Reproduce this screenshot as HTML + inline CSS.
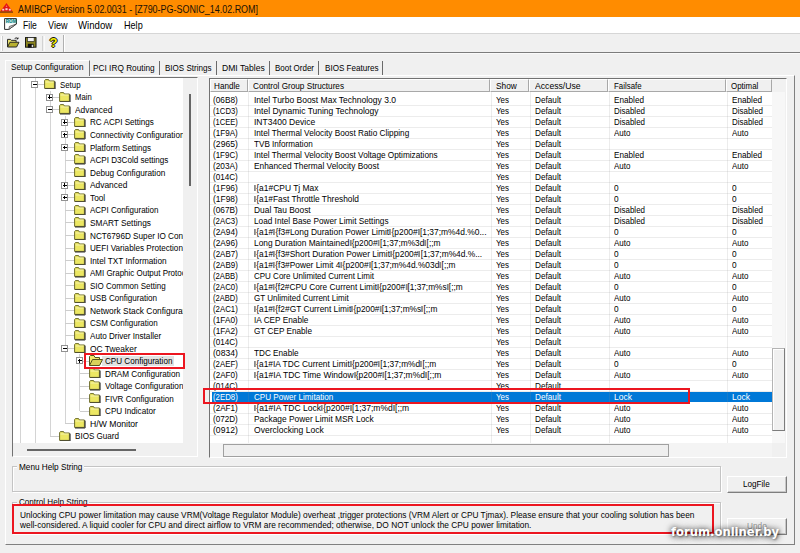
<!DOCTYPE html><html><head><meta charset="utf-8"><title>AMIBCP</title><style>*{box-sizing:border-box;margin:0;padding:0}
html,body{width:800px;height:553px;overflow:hidden;background:#f0f0f0}
body{font-family:"Liberation Sans",sans-serif;font-size:9.3px;color:#000}
#app{position:relative;width:800px;height:553px;overflow:hidden;background:#f0f0f0}
.t{position:absolute;display:block;white-space:nowrap;transform-origin:0 0}
#title{position:absolute;left:0;top:0;width:800px;height:17px;background:#ff8c00}
#ticon{position:absolute;left:0;top:2.8px}
.tt0{font-size:10.6px;line-height:12px;color:#1a1206}
#menu{position:absolute;left:0;top:17px;width:800px;height:16px;background:#fff}
#micon{position:absolute;left:3.8px;top:1.2px}
.mi{font-size:11px;line-height:14px}
#tb{position:absolute;left:0;top:33px;width:800px;height:20.3px;background:#f0f0f0;border-top:1px solid #d6d6d6;border-bottom:1.3px solid #7c7c7c;box-shadow:0 1px 0 #fafafa}
.grip{position:absolute;left:0.5px;top:2px;width:2px;height:15px;border-left:1px solid #fff;border-right:1px solid #cecece}
.tbi{position:absolute}
.sep{position:absolute;top:1.5px;width:2.5px;height:15px;border-left:1.5px solid #d2d2d2;border-right:1px solid #fafafa}
.sep2{position:absolute;top:0.8px;width:2px;height:17px;border-left:1.2px solid #b0b0b0;border-right:1px solid #fff}
.q{position:absolute;left:49.5px;top:0.5px;font-size:13px;line-height:16px;font-weight:bold;color:#f6f000;text-shadow:-1px 0 #111,1px 0 #111,0 1px #111,0 -1px #111}
#panel{position:absolute;left:5px;top:75px;width:789.9px;height:469.8px;border:1px solid #fff;border-right:1.9px solid #808080;border-bottom:1.4px solid #808080}
.tabact{position:absolute;left:5px;top:59.6px;width:85.2px;height:16.4px;background:#f0f0f0;border:1px solid #fff;border-right:1.6px solid #747474;border-bottom:0}
.tb1{font-size:9.8px;line-height:12px}
.tsep{position:absolute;top:61px;width:1.2px;height:13.5px;background:#6a6a6a}
#tree{position:absolute;left:11.7px;top:76.6px;width:186px;height:380.6px;background:#f0f0f0;border:1.4px solid #727272;border-right:1px solid #fff;border-bottom:1px solid #fff}
#treeclip{position:absolute;left:0;top:0;width:170.7px;height:365.6px;overflow:hidden;background:#fff}
.tt{line-height:13px;font-size:9.6px}
.fold{position:absolute}
.hl{position:absolute;height:1px;background:#cdcdcd}
.vl{position:absolute;width:1px;background:#d4d4d4}
.box{position:absolute;width:7.2px;height:7px;border:1px solid #919191;background:#fff}
.box .h{position:absolute;left:0.8px;top:2px;width:3.6px;height:1px;background:#000}
.box .v{position:absolute;left:2.1px;top:0.7px;width:1px;height:3.6px;background:#000}
.tsel{position:absolute;width:71.8px;height:9.6px;background:#e2e2e2}
#tvs{position:absolute;left:176.3px;top:16px;width:1.6px;height:92px;background:#666}
#ths{position:absolute;left:14px;top:371.5px;width:109.5px;height:1.6px;background:#666}
#list{position:absolute;left:208.6px;top:77.9px;width:578px;height:380px;background:#f0f0f0;border:1.4px solid #727272;border-right:1px solid #fff;border-bottom:1px solid #fff}
#hdr{position:absolute;left:0;top:0;width:576px;height:13.2px;background:#f1f1f1}
.hc{position:absolute;top:0;height:13.2px;background:#f0f0f0;border-left:1px solid #fff;border-top:1px solid #fff;border-right:1px solid #a8a8a8;border-bottom:1px solid #a8a8a8}
.ht{line-height:11px}
#rows{position:absolute;left:0;top:13.2px;width:562.3px;height:351px;background:#fff;overflow:hidden}
.cl{position:absolute;top:0;width:1px;height:352px;background:rgba(140,140,140,.17)}
.r{position:absolute;left:0;width:563px;height:11px;white-space:nowrap;border-bottom:1px solid #ececec}
.lt{line-height:11px}
.r.sel{background:linear-gradient(90deg,#fff 1.7px,#0078d7 1.7px);color:#fff;border-bottom:0;height:10px}
.e{display:inline-block;width:2px;height:6.4px;border:.55px solid #8a8a8a;margin:0 .25px;vertical-align:-0.3px}
#lvs{position:absolute;left:562.3px;top:13.2px;width:13.5px;height:351px;background:#f7f7f7}
#lvt{position:absolute;left:0.3px;top:255.7px;width:12.6px;height:83px;background:#f0f0f0;border:1px solid #b4b4b4;border-right:1.3px solid #7c7c7c;border-bottom:1.3px solid #7c7c7c;box-shadow:inset 1px 1px 0 #fff}
#lhs{position:absolute;left:0;top:364.2px;width:562.3px;height:13.6px;background:#f4f4f4}
#lht{position:absolute;left:13.2px;top:0.8px;width:446px;height:12.8px;background:#efefef;border:1px solid #a0a0a0}
.gb{position:absolute;border:1px solid #c4c4c4;box-shadow:inset 1px 1px 0 #fff,1px 1px 0 #fff}
.glb{position:absolute;height:10px;background:#f0f0f0}
.gl{line-height:12px;font-size:9.6px}
.hp{line-height:11px;font-size:9.3px}
.btn{position:absolute;background:#f0f0f0;border:1px solid #fff;border-right:1.7px solid #7e7e7e;border-bottom:1.5px solid #7e7e7e;box-shadow:inset -1px -1px 0 #c8c8c8}
.bt{line-height:12px;font-size:9.6px}
.bt.dis{color:#9a9a9a;text-shadow:.8px .8px 0 #fff}
.red{position:absolute;border:2px solid #ec1620}
.wm{font-family:"DejaVu Sans","Liberation Sans",sans-serif;font-size:11.6px;font-weight:bold;color:#fff;line-height:14px;text-shadow:0 0 5px rgba(0,0,0,.5),0 0 8px rgba(0,0,0,.4),1px 1px 2px rgba(0,0,0,.35),0 2px 7px rgba(0,0,0,.3)}
</style></head><body>
<div id="app">
<div id="title"><svg id="ticon" width="13" height="10" viewBox="0 0 13 10"><polygon points="6.5,0 12.6,8.6 0.2,8.6" fill="#e41414"/><path d="M5.6,3.6L6.5,2.4L7.4,3.6Z" fill="#ffd0c0"/><rect x="2.2" y="5.8" width="2" height="1.8" fill="#f6d2c8"/><rect x="5.4" y="5.2" width="2.2" height="2" fill="#f6d2c8"/><rect x="8.8" y="5.8" width="2" height="1.8" fill="#f6d2c8"/><rect x="0" y="8.6" width="13" height="1" fill="#5a2410"/></svg><span id="t0" class="t tt0" style="left:17.50px;top:2.60px;transform:scaleX(0.8445);">AMIBCP Version 5.02.0031 - [Z790-PG-SONIC_14.02.ROM]</span></div>
<div id="menu"><svg id="micon" width="13" height="12" viewBox="0 0 13 12"><path d="M0.6,0.6H12.4V6L4.8,11.4H0.6Z" fill="#fff" stroke="#2a2a2a" stroke-width="1"/><rect x="1.6" y="1.4" width="9.8" height="3.8" fill="#bfe4e4"/><text x="1.8" y="5" font-size="4.6" font-family="Liberation Sans, sans-serif" font-weight="bold" fill="#0a8080">ROM</text><path d="M12.4,6L4.8,11.4L5.4,8.4Z" fill="#c8c8c8" stroke="#2a2a2a" stroke-width=".6"/></svg><span id="t1" class="t mi" style="left:22.50px;top:1.00px;transform:scaleX(0.7781);">File</span><span id="t2" class="t mi" style="left:47.50px;top:1.00px;transform:scaleX(0.8243);">View</span><span id="t3" class="t mi" style="left:78.30px;top:1.00px;transform:scaleX(0.8741);">Window</span><span id="t4" class="t mi" style="left:124.30px;top:1.00px;transform:scaleX(0.8265);">Help</span></div>
<div id="tb"><div class="grip"></div><svg class="tbi" style="left:7px;top:3px" width="12.5" height="10.5" viewBox="0 0 13 11"><path d="M0.5,10.5V2.5H3.5L4.5,3.5H9.5V5.5" fill="#e8e070" stroke="#222"/><path d="M0.5,10.5L3,5.5H12.5L10,10.5Z" fill="#b8b030" stroke="#222"/><path d="M8,1.5Q10,0 11.5,2M11.5,2V0.5M11.5,2H10" fill="none" stroke="#222"/></svg><svg class="tbi" style="left:25px;top:3px" width="11.5" height="10.8" viewBox="0 0 12 11"><rect x="0.5" y="0.5" width="11" height="10" fill="#8a8420" stroke="#111"/><rect x="2.5" y="0.5" width="7" height="4" fill="#f4f4f4" stroke="#111" stroke-width=".6"/><rect x="3" y="7" width="6" height="4" fill="#111"/><rect x="7" y="8" width="1.5" height="2.5" fill="#ddd"/></svg><div class="sep" style="left:42px"></div><span class="q">?</span><div class="sep2" style="left:63px"></div></div>
<div id="panel"></div>
<div class="tabact"></div>
<span id="t5" class="t tb1" style="left:11.30px;top:60.90px;transform:scaleX(0.8371);">Setup Configuration</span>
<span id="t6" class="t tb1" style="left:93.30px;top:62.30px;transform:scaleX(0.8456);">PCI IRQ Routing</span>
<div class="tsep" style="left:158.8px"></div>
<span id="t7" class="t tb1" style="left:165.00px;top:62.30px;transform:scaleX(0.8212);">BIOS Strings</span>
<div class="tsep" style="left:216.1px"></div>
<span id="t8" class="t tb1" style="left:222.00px;top:62.30px;transform:scaleX(0.8745);">DMI Tables</span>
<div class="tsep" style="left:269.0px"></div>
<span id="t9" class="t tb1" style="left:275.20px;top:62.30px;transform:scaleX(0.8138);">Boot Order</span>
<div class="tsep" style="left:318.2px"></div>
<span id="t10" class="t tb1" style="left:324.70px;top:62.30px;transform:scaleX(0.8257);">BIOS Features</span>
<div class="tsep" style="left:382.2px"></div>
<div id="tree"><div id="treeclip">
<div class="vl" style="left:7.0px;top:-5.9px;height:389.4px"></div>
<div class="vl" style="left:22.0px;top:-5.9px;height:389.4px"></div>
<div class="vl" style="left:37.0px;top:13.0px;height:345.4px"></div>
<div class="vl" style="left:52.0px;top:38.1px;height:307.7px"></div>
<div class="vl" style="left:66.6px;top:276.7px;height:56.5px"></div>
<div class="hl" style="left:22.0px;top:6.7px;width:10.0px"></div>
<div class="box" style="left:18.6px;top:3.5px"><i class="h"></i></div>
<svg class="fold" style="left:31.1px;top:1.5px" width="12" height="10.4" viewBox="0 0 12 10.4"><path d="M0.6,9.4V1.6L1.4,0.6H4.6L5.4,2H10.4V9.4Z" fill="#ece763" stroke="#6b6a2a" stroke-width="1"/><path d="M1.5,3H9.6" stroke="#f8f5b4" stroke-width=".9" fill="none"/><path d="M11.1,2.6V10H1" stroke="#2a2a2a" stroke-width="1" fill="none"/></svg>
<span id="t11" class="t tt" style="left:47.30px;top:0.20px;transform:scaleX(0.8174);">Setup</span>
<div class="hl" style="left:37.0px;top:19.3px;width:10.0px"></div>
<div class="box" style="left:33.6px;top:16.1px"><i class="h"></i><i class="v"></i></div>
<svg class="fold" style="left:46.1px;top:14.1px" width="12" height="10.4" viewBox="0 0 12 10.4"><path d="M0.6,9.4V1.6L1.4,0.6H4.6L5.4,2H10.4V9.4Z" fill="#ece763" stroke="#6b6a2a" stroke-width="1"/><path d="M1.5,3H9.6" stroke="#f8f5b4" stroke-width=".9" fill="none"/><path d="M11.1,2.6V10H1" stroke="#2a2a2a" stroke-width="1" fill="none"/></svg>
<span id="t12" class="t tt" style="left:62.30px;top:12.76px;transform:scaleX(0.8030);">Main</span>
<div class="hl" style="left:37.0px;top:31.8px;width:10.0px"></div>
<div class="box" style="left:33.6px;top:28.6px"><i class="h"></i></div>
<svg class="fold" style="left:46.1px;top:26.6px" width="12" height="10.4" viewBox="0 0 12 10.4"><path d="M0.6,9.4V1.6L1.4,0.6H4.6L5.4,2H10.4V9.4Z" fill="#ece763" stroke="#6b6a2a" stroke-width="1"/><path d="M1.5,3H9.6" stroke="#f8f5b4" stroke-width=".9" fill="none"/><path d="M11.1,2.6V10H1" stroke="#2a2a2a" stroke-width="1" fill="none"/></svg>
<span id="t13" class="t tt" style="left:62.30px;top:25.32px;transform:scaleX(0.8741);">Advanced</span>
<div class="hl" style="left:52.0px;top:44.4px;width:10.0px"></div>
<div class="box" style="left:48.6px;top:41.2px"><i class="h"></i><i class="v"></i></div>
<svg class="fold" style="left:61.1px;top:39.2px" width="12" height="10.4" viewBox="0 0 12 10.4"><path d="M0.6,9.4V1.6L1.4,0.6H4.6L5.4,2H10.4V9.4Z" fill="#ece763" stroke="#6b6a2a" stroke-width="1"/><path d="M1.5,3H9.6" stroke="#f8f5b4" stroke-width=".9" fill="none"/><path d="M11.1,2.6V10H1" stroke="#2a2a2a" stroke-width="1" fill="none"/></svg>
<span id="t14" class="t tt" style="left:77.30px;top:37.88px;transform:scaleX(0.8439);">RC ACPI Settings</span>
<div class="hl" style="left:52.0px;top:56.9px;width:10.0px"></div>
<div class="box" style="left:48.6px;top:53.7px"><i class="h"></i><i class="v"></i></div>
<svg class="fold" style="left:61.1px;top:51.7px" width="12" height="10.4" viewBox="0 0 12 10.4"><path d="M0.6,9.4V1.6L1.4,0.6H4.6L5.4,2H10.4V9.4Z" fill="#ece763" stroke="#6b6a2a" stroke-width="1"/><path d="M1.5,3H9.6" stroke="#f8f5b4" stroke-width=".9" fill="none"/><path d="M11.1,2.6V10H1" stroke="#2a2a2a" stroke-width="1" fill="none"/></svg>
<span id="t15" class="t tt" style="left:77.30px;top:50.44px;transform:scaleX(0.8429);">Connectivity Configuration</span>
<div class="hl" style="left:52.0px;top:69.5px;width:10.0px"></div>
<div class="box" style="left:48.6px;top:66.3px"><i class="h"></i><i class="v"></i></div>
<svg class="fold" style="left:61.1px;top:64.3px" width="12" height="10.4" viewBox="0 0 12 10.4"><path d="M0.6,9.4V1.6L1.4,0.6H4.6L5.4,2H10.4V9.4Z" fill="#ece763" stroke="#6b6a2a" stroke-width="1"/><path d="M1.5,3H9.6" stroke="#f8f5b4" stroke-width=".9" fill="none"/><path d="M11.1,2.6V10H1" stroke="#2a2a2a" stroke-width="1" fill="none"/></svg>
<span id="t16" class="t tt" style="left:77.30px;top:63.00px;transform:scaleX(0.8349);">Platform Settings</span>
<div class="hl" style="left:52.0px;top:82.1px;width:10.0px"></div>
<svg class="fold" style="left:61.1px;top:76.9px" width="12" height="10.4" viewBox="0 0 12 10.4"><path d="M0.6,9.4V1.6L1.4,0.6H4.6L5.4,2H10.4V9.4Z" fill="#ece763" stroke="#6b6a2a" stroke-width="1"/><path d="M1.5,3H9.6" stroke="#f8f5b4" stroke-width=".9" fill="none"/><path d="M11.1,2.6V10H1" stroke="#2a2a2a" stroke-width="1" fill="none"/></svg>
<span id="t17" class="t tt" style="left:77.30px;top:75.56px;transform:scaleX(0.8450);">ACPI D3Cold settings</span>
<div class="hl" style="left:52.0px;top:94.6px;width:10.0px"></div>
<svg class="fold" style="left:61.1px;top:89.4px" width="12" height="10.4" viewBox="0 0 12 10.4"><path d="M0.6,9.4V1.6L1.4,0.6H4.6L5.4,2H10.4V9.4Z" fill="#ece763" stroke="#6b6a2a" stroke-width="1"/><path d="M1.5,3H9.6" stroke="#f8f5b4" stroke-width=".9" fill="none"/><path d="M11.1,2.6V10H1" stroke="#2a2a2a" stroke-width="1" fill="none"/></svg>
<span id="t18" class="t tt" style="left:77.30px;top:88.12px;transform:scaleX(0.8555);">Debug Configuration</span>
<div class="hl" style="left:52.0px;top:107.2px;width:10.0px"></div>
<div class="box" style="left:48.6px;top:104.0px"><i class="h"></i><i class="v"></i></div>
<svg class="fold" style="left:61.1px;top:102.0px" width="12" height="10.4" viewBox="0 0 12 10.4"><path d="M0.6,9.4V1.6L1.4,0.6H4.6L5.4,2H10.4V9.4Z" fill="#ece763" stroke="#6b6a2a" stroke-width="1"/><path d="M1.5,3H9.6" stroke="#f8f5b4" stroke-width=".9" fill="none"/><path d="M11.1,2.6V10H1" stroke="#2a2a2a" stroke-width="1" fill="none"/></svg>
<span id="t19" class="t tt" style="left:77.30px;top:100.68px;transform:scaleX(0.8741);">Advanced</span>
<div class="hl" style="left:52.0px;top:119.7px;width:10.0px"></div>
<div class="box" style="left:48.6px;top:116.5px"><i class="h"></i><i class="v"></i></div>
<svg class="fold" style="left:61.1px;top:114.5px" width="12" height="10.4" viewBox="0 0 12 10.4"><path d="M0.6,9.4V1.6L1.4,0.6H4.6L5.4,2H10.4V9.4Z" fill="#ece763" stroke="#6b6a2a" stroke-width="1"/><path d="M1.5,3H9.6" stroke="#f8f5b4" stroke-width=".9" fill="none"/><path d="M11.1,2.6V10H1" stroke="#2a2a2a" stroke-width="1" fill="none"/></svg>
<span id="t20" class="t tt" style="left:77.30px;top:113.24px;transform:scaleX(0.8632);">Tool</span>
<div class="hl" style="left:52.0px;top:132.3px;width:10.0px"></div>
<svg class="fold" style="left:61.1px;top:127.1px" width="12" height="10.4" viewBox="0 0 12 10.4"><path d="M0.6,9.4V1.6L1.4,0.6H4.6L5.4,2H10.4V9.4Z" fill="#ece763" stroke="#6b6a2a" stroke-width="1"/><path d="M1.5,3H9.6" stroke="#f8f5b4" stroke-width=".9" fill="none"/><path d="M11.1,2.6V10H1" stroke="#2a2a2a" stroke-width="1" fill="none"/></svg>
<span id="t21" class="t tt" style="left:77.30px;top:125.80px;transform:scaleX(0.8341);">ACPI Configuration</span>
<div class="hl" style="left:52.0px;top:144.9px;width:10.0px"></div>
<svg class="fold" style="left:61.1px;top:139.7px" width="12" height="10.4" viewBox="0 0 12 10.4"><path d="M0.6,9.4V1.6L1.4,0.6H4.6L5.4,2H10.4V9.4Z" fill="#ece763" stroke="#6b6a2a" stroke-width="1"/><path d="M1.5,3H9.6" stroke="#f8f5b4" stroke-width=".9" fill="none"/><path d="M11.1,2.6V10H1" stroke="#2a2a2a" stroke-width="1" fill="none"/></svg>
<span id="t22" class="t tt" style="left:77.30px;top:138.36px;transform:scaleX(0.8631);">SMART Settings</span>
<div class="hl" style="left:52.0px;top:157.4px;width:10.0px"></div>
<svg class="fold" style="left:61.1px;top:152.2px" width="12" height="10.4" viewBox="0 0 12 10.4"><path d="M0.6,9.4V1.6L1.4,0.6H4.6L5.4,2H10.4V9.4Z" fill="#ece763" stroke="#6b6a2a" stroke-width="1"/><path d="M1.5,3H9.6" stroke="#f8f5b4" stroke-width=".9" fill="none"/><path d="M11.1,2.6V10H1" stroke="#2a2a2a" stroke-width="1" fill="none"/></svg>
<span id="t23" class="t tt" style="left:77.30px;top:150.92px;transform:scaleX(0.8511);">NCT6796D Super IO Configuration</span>
<div class="hl" style="left:52.0px;top:170.0px;width:10.0px"></div>
<svg class="fold" style="left:61.1px;top:164.8px" width="12" height="10.4" viewBox="0 0 12 10.4"><path d="M0.6,9.4V1.6L1.4,0.6H4.6L5.4,2H10.4V9.4Z" fill="#ece763" stroke="#6b6a2a" stroke-width="1"/><path d="M1.5,3H9.6" stroke="#f8f5b4" stroke-width=".9" fill="none"/><path d="M11.1,2.6V10H1" stroke="#2a2a2a" stroke-width="1" fill="none"/></svg>
<span id="t24" class="t tt" style="left:77.30px;top:163.48px;transform:scaleX(0.8471);">UEFI Variables Protection</span>
<div class="hl" style="left:52.0px;top:182.5px;width:10.0px"></div>
<svg class="fold" style="left:61.1px;top:177.3px" width="12" height="10.4" viewBox="0 0 12 10.4"><path d="M0.6,9.4V1.6L1.4,0.6H4.6L5.4,2H10.4V9.4Z" fill="#ece763" stroke="#6b6a2a" stroke-width="1"/><path d="M1.5,3H9.6" stroke="#f8f5b4" stroke-width=".9" fill="none"/><path d="M11.1,2.6V10H1" stroke="#2a2a2a" stroke-width="1" fill="none"/></svg>
<span id="t25" class="t tt" style="left:77.30px;top:176.04px;transform:scaleX(0.8584);">Intel TXT Information</span>
<div class="hl" style="left:52.0px;top:195.1px;width:10.0px"></div>
<svg class="fold" style="left:61.1px;top:189.9px" width="12" height="10.4" viewBox="0 0 12 10.4"><path d="M0.6,9.4V1.6L1.4,0.6H4.6L5.4,2H10.4V9.4Z" fill="#ece763" stroke="#6b6a2a" stroke-width="1"/><path d="M1.5,3H9.6" stroke="#f8f5b4" stroke-width=".9" fill="none"/><path d="M11.1,2.6V10H1" stroke="#2a2a2a" stroke-width="1" fill="none"/></svg>
<span id="t26" class="t tt" style="left:77.30px;top:188.60px;transform:scaleX(0.8308);">AMI Graphic Output Protocol Policy</span>
<div class="hl" style="left:52.0px;top:207.7px;width:10.0px"></div>
<svg class="fold" style="left:61.1px;top:202.5px" width="12" height="10.4" viewBox="0 0 12 10.4"><path d="M0.6,9.4V1.6L1.4,0.6H4.6L5.4,2H10.4V9.4Z" fill="#ece763" stroke="#6b6a2a" stroke-width="1"/><path d="M1.5,3H9.6" stroke="#f8f5b4" stroke-width=".9" fill="none"/><path d="M11.1,2.6V10H1" stroke="#2a2a2a" stroke-width="1" fill="none"/></svg>
<span id="t27" class="t tt" style="left:77.30px;top:201.16px;transform:scaleX(0.8350);">SIO Common Setting</span>
<div class="hl" style="left:52.0px;top:220.2px;width:10.0px"></div>
<svg class="fold" style="left:61.1px;top:215.0px" width="12" height="10.4" viewBox="0 0 12 10.4"><path d="M0.6,9.4V1.6L1.4,0.6H4.6L5.4,2H10.4V9.4Z" fill="#ece763" stroke="#6b6a2a" stroke-width="1"/><path d="M1.5,3H9.6" stroke="#f8f5b4" stroke-width=".9" fill="none"/><path d="M11.1,2.6V10H1" stroke="#2a2a2a" stroke-width="1" fill="none"/></svg>
<span id="t28" class="t tt" style="left:77.30px;top:213.72px;transform:scaleX(0.8444);">USB Configuration</span>
<div class="hl" style="left:52.0px;top:232.8px;width:10.0px"></div>
<svg class="fold" style="left:61.1px;top:227.6px" width="12" height="10.4" viewBox="0 0 12 10.4"><path d="M0.6,9.4V1.6L1.4,0.6H4.6L5.4,2H10.4V9.4Z" fill="#ece763" stroke="#6b6a2a" stroke-width="1"/><path d="M1.5,3H9.6" stroke="#f8f5b4" stroke-width=".9" fill="none"/><path d="M11.1,2.6V10H1" stroke="#2a2a2a" stroke-width="1" fill="none"/></svg>
<span id="t29" class="t tt" style="left:77.30px;top:226.28px;transform:scaleX(0.8736);">Network Stack Configuration</span>
<div class="hl" style="left:52.0px;top:245.3px;width:10.0px"></div>
<svg class="fold" style="left:61.1px;top:240.1px" width="12" height="10.4" viewBox="0 0 12 10.4"><path d="M0.6,9.4V1.6L1.4,0.6H4.6L5.4,2H10.4V9.4Z" fill="#ece763" stroke="#6b6a2a" stroke-width="1"/><path d="M1.5,3H9.6" stroke="#f8f5b4" stroke-width=".9" fill="none"/><path d="M11.1,2.6V10H1" stroke="#2a2a2a" stroke-width="1" fill="none"/></svg>
<span id="t30" class="t tt" style="left:77.30px;top:238.84px;transform:scaleX(0.8352);">CSM Configuration</span>
<div class="hl" style="left:52.0px;top:257.9px;width:10.0px"></div>
<svg class="fold" style="left:61.1px;top:252.7px" width="12" height="10.4" viewBox="0 0 12 10.4"><path d="M0.6,9.4V1.6L1.4,0.6H4.6L5.4,2H10.4V9.4Z" fill="#ece763" stroke="#6b6a2a" stroke-width="1"/><path d="M1.5,3H9.6" stroke="#f8f5b4" stroke-width=".9" fill="none"/><path d="M11.1,2.6V10H1" stroke="#2a2a2a" stroke-width="1" fill="none"/></svg>
<span id="t31" class="t tt" style="left:77.30px;top:251.40px;transform:scaleX(0.8451);">Auto Driver Installer</span>
<div class="hl" style="left:52.0px;top:270.5px;width:10.0px"></div>
<div class="box" style="left:48.6px;top:267.3px"><i class="h"></i></div>
<svg class="fold" style="left:61.1px;top:265.3px" width="12" height="10.4" viewBox="0 0 12 10.4"><path d="M0.6,9.4V1.6L1.4,0.6H4.6L5.4,2H10.4V9.4Z" fill="#ece763" stroke="#6b6a2a" stroke-width="1"/><path d="M1.5,3H9.6" stroke="#f8f5b4" stroke-width=".9" fill="none"/><path d="M11.1,2.6V10H1" stroke="#2a2a2a" stroke-width="1" fill="none"/></svg>
<span id="t32" class="t tt" style="left:77.30px;top:263.96px;transform:scaleX(0.8788);">OC Tweaker</span>
<div class="hl" style="left:67.0px;top:283.0px;width:10.0px"></div>
<div class="box" style="left:63.6px;top:279.8px"><i class="h"></i><i class="v"></i></div>
<div class="tsel" style="left:89.3px;top:278.4px"></div>
<svg class="fold" style="left:76.3px;top:277.5px" width="14" height="11" viewBox="0 0 14 11"><path d="M0.5,10.5V1.5L1.5,0.5H5L6,2.5H10.5V4.5" fill="#f1ea6b" stroke="#55531c"/><path d="M0.5,10.5L3.5,4.5H13.5L10.5,10.5Z" fill="#d9d15a" stroke="#55531c"/></svg>
<span id="t33" class="t tt" style="left:92.30px;top:276.52px;transform:scaleX(0.8425);">CPU Configuration</span>
<div class="hl" style="left:67.0px;top:295.6px;width:10.0px"></div>
<svg class="fold" style="left:76.1px;top:290.4px" width="12" height="10.4" viewBox="0 0 12 10.4"><path d="M0.6,9.4V1.6L1.4,0.6H4.6L5.4,2H10.4V9.4Z" fill="#ece763" stroke="#6b6a2a" stroke-width="1"/><path d="M1.5,3H9.6" stroke="#f8f5b4" stroke-width=".9" fill="none"/><path d="M11.1,2.6V10H1" stroke="#2a2a2a" stroke-width="1" fill="none"/></svg>
<span id="t34" class="t tt" style="left:92.30px;top:289.08px;transform:scaleX(0.8524);">DRAM Configuration</span>
<div class="hl" style="left:67.0px;top:308.1px;width:10.0px"></div>
<svg class="fold" style="left:76.1px;top:302.9px" width="12" height="10.4" viewBox="0 0 12 10.4"><path d="M0.6,9.4V1.6L1.4,0.6H4.6L5.4,2H10.4V9.4Z" fill="#ece763" stroke="#6b6a2a" stroke-width="1"/><path d="M1.5,3H9.6" stroke="#f8f5b4" stroke-width=".9" fill="none"/><path d="M11.1,2.6V10H1" stroke="#2a2a2a" stroke-width="1" fill="none"/></svg>
<span id="t35" class="t tt" style="left:92.30px;top:301.64px;transform:scaleX(0.8556);">Voltage Configuration</span>
<div class="hl" style="left:67.0px;top:320.7px;width:10.0px"></div>
<svg class="fold" style="left:76.1px;top:315.5px" width="12" height="10.4" viewBox="0 0 12 10.4"><path d="M0.6,9.4V1.6L1.4,0.6H4.6L5.4,2H10.4V9.4Z" fill="#ece763" stroke="#6b6a2a" stroke-width="1"/><path d="M1.5,3H9.6" stroke="#f8f5b4" stroke-width=".9" fill="none"/><path d="M11.1,2.6V10H1" stroke="#2a2a2a" stroke-width="1" fill="none"/></svg>
<span id="t36" class="t tt" style="left:92.30px;top:314.20px;transform:scaleX(0.8420);">FIVR Configuration</span>
<div class="hl" style="left:67.0px;top:333.3px;width:10.0px"></div>
<svg class="fold" style="left:76.1px;top:328.1px" width="12" height="10.4" viewBox="0 0 12 10.4"><path d="M0.6,9.4V1.6L1.4,0.6H4.6L5.4,2H10.4V9.4Z" fill="#ece763" stroke="#6b6a2a" stroke-width="1"/><path d="M1.5,3H9.6" stroke="#f8f5b4" stroke-width=".9" fill="none"/><path d="M11.1,2.6V10H1" stroke="#2a2a2a" stroke-width="1" fill="none"/></svg>
<span id="t37" class="t tt" style="left:92.30px;top:326.76px;transform:scaleX(0.8490);">CPU Indicator</span>
<div class="hl" style="left:52.0px;top:345.8px;width:10.0px"></div>
<svg class="fold" style="left:61.1px;top:340.6px" width="12" height="10.4" viewBox="0 0 12 10.4"><path d="M0.6,9.4V1.6L1.4,0.6H4.6L5.4,2H10.4V9.4Z" fill="#ece763" stroke="#6b6a2a" stroke-width="1"/><path d="M1.5,3H9.6" stroke="#f8f5b4" stroke-width=".9" fill="none"/><path d="M11.1,2.6V10H1" stroke="#2a2a2a" stroke-width="1" fill="none"/></svg>
<span id="t38" class="t tt" style="left:77.30px;top:339.32px;transform:scaleX(0.9004);">H/W Monitor</span>
<div class="hl" style="left:37.0px;top:358.4px;width:10.0px"></div>
<svg class="fold" style="left:46.1px;top:353.2px" width="12" height="10.4" viewBox="0 0 12 10.4"><path d="M0.6,9.4V1.6L1.4,0.6H4.6L5.4,2H10.4V9.4Z" fill="#ece763" stroke="#6b6a2a" stroke-width="1"/><path d="M1.5,3H9.6" stroke="#f8f5b4" stroke-width=".9" fill="none"/><path d="M11.1,2.6V10H1" stroke="#2a2a2a" stroke-width="1" fill="none"/></svg>
<span id="t39" class="t tt" style="left:62.30px;top:351.88px;transform:scaleX(0.8419);">BIOS Guard</span>
</div>
<div id="tvs"></div><div id="ths"></div>
</div>
<div id="list">
<div id="hdr">
<div class="hc" style="left:0.0px;width:38.8px"></div>
<span id="t40" class="t ht" style="left:4.80px;top:2.60px;transform:scaleX(0.8755);">Handle</span>
<div class="hc" style="left:38.8px;width:241.3px"></div>
<span id="t41" class="t ht" style="left:43.80px;top:2.60px;transform:scaleX(0.8806);">Control Group Structures</span>
<div class="hc" style="left:280.1px;width:39.1px"></div>
<span id="t42" class="t ht" style="left:286.00px;top:2.60px;transform:scaleX(0.8940);">Show</span>
<div class="hc" style="left:319.2px;width:79.0px"></div>
<span id="t43" class="t ht" style="left:325.20px;top:2.60px;transform:scaleX(0.9288);">Access/Use</span>
<div class="hc" style="left:398.2px;width:118.6px"></div>
<span id="t44" class="t ht" style="left:404.00px;top:2.60px;transform:scaleX(0.8476);">Failsafe</span>
<div class="hc" style="left:516.8px;width:45.7px"></div>
<span id="t45" class="t ht" style="left:521.50px;top:2.60px;transform:scaleX(0.8523);">Optimal</span>
</div>
<div id="rows">
<div class="r" style="top:2.60px"><span id="t46" class="t lt" style="left:3.00px;top:0.00px;transform:scaleX(0.8887);">(06B8)</span><span id="t47" class="t lt" style="left:44.30px;top:0.00px;transform:scaleX(0.9138);">Intel Turbo Boost Max Technology 3.0</span><span id="t48" class="t lt" style="left:286.30px;top:0.00px;transform:scaleX(0.8568);">Yes</span><span id="t49" class="t lt" style="left:325.30px;top:0.00px;transform:scaleX(0.8823);">Default</span><span id="t50" class="t lt" style="left:404.00px;top:0.00px;transform:scaleX(0.8791);">Enabled</span><span id="t51" class="t lt" style="left:522.00px;top:0.00px;transform:scaleX(0.8791);">Enabled</span></div>
<div class="r" style="top:13.61px"><span id="t52" class="t lt" style="left:3.00px;top:0.00px;transform:scaleX(0.8275);">(1CD3)</span><span id="t53" class="t lt" style="left:44.30px;top:0.00px;transform:scaleX(0.9137);">Intel Dynamic Tuning Technology</span><span id="t54" class="t lt" style="left:286.30px;top:0.00px;transform:scaleX(0.8568);">Yes</span><span id="t55" class="t lt" style="left:325.30px;top:0.00px;transform:scaleX(0.8823);">Default</span><span id="t56" class="t lt" style="left:404.00px;top:0.00px;transform:scaleX(0.8566);">Disabled</span><span id="t57" class="t lt" style="left:522.00px;top:0.00px;transform:scaleX(0.8566);">Disabled</span></div>
<div class="r" style="top:24.62px"><span id="t58" class="t lt" style="left:3.00px;top:0.00px;transform:scaleX(0.8135);">(1CEE)</span><span id="t59" class="t lt" style="left:44.30px;top:0.00px;transform:scaleX(0.9179);">INT3400 Device</span><span id="t60" class="t lt" style="left:286.30px;top:0.00px;transform:scaleX(0.8568);">Yes</span><span id="t61" class="t lt" style="left:325.30px;top:0.00px;transform:scaleX(0.8823);">Default</span><span id="t62" class="t lt" style="left:404.00px;top:0.00px;transform:scaleX(0.8566);">Disabled</span><span id="t63" class="t lt" style="left:522.00px;top:0.00px;transform:scaleX(0.8566);">Disabled</span></div>
<div class="r" style="top:35.63px"><span id="t64" class="t lt" style="left:3.00px;top:0.00px;transform:scaleX(0.8726);">(1F9A)</span><span id="t65" class="t lt" style="left:44.30px;top:0.00px;transform:scaleX(0.8842);">Intel Thermal Velocity Boost Ratio Clipping</span><span id="t66" class="t lt" style="left:286.30px;top:0.00px;transform:scaleX(0.8568);">Yes</span><span id="t67" class="t lt" style="left:325.30px;top:0.00px;transform:scaleX(0.8823);">Default</span><span id="t68" class="t lt" style="left:404.00px;top:0.00px;transform:scaleX(0.8627);">Auto</span><span id="t69" class="t lt" style="left:522.00px;top:0.00px;transform:scaleX(0.8627);">Auto</span></div>
<div class="r" style="top:46.64px"><span id="t70" class="t lt" style="left:3.00px;top:0.00px;transform:scaleX(0.9228);">(2965)</span><span id="t71" class="t lt" style="left:44.30px;top:0.00px;transform:scaleX(0.8739);">TVB Information</span><span id="t72" class="t lt" style="left:286.30px;top:0.00px;transform:scaleX(0.8568);">Yes</span><span id="t73" class="t lt" style="left:325.30px;top:0.00px;transform:scaleX(0.8823);">Default</span></div>
<div class="r" style="top:57.65px"><span id="t74" class="t lt" style="left:3.00px;top:0.00px;transform:scaleX(0.8570);">(1F9C)</span><span id="t75" class="t lt" style="left:44.30px;top:0.00px;transform:scaleX(0.8850);">Intel Thermal Velocity Boost Voltage Optimizations</span><span id="t76" class="t lt" style="left:286.30px;top:0.00px;transform:scaleX(0.8568);">Yes</span><span id="t77" class="t lt" style="left:325.30px;top:0.00px;transform:scaleX(0.8823);">Default</span><span id="t78" class="t lt" style="left:404.00px;top:0.00px;transform:scaleX(0.8791);">Enabled</span><span id="t79" class="t lt" style="left:522.00px;top:0.00px;transform:scaleX(0.8791);">Enabled</span></div>
<div class="r" style="top:68.66px"><span id="t80" class="t lt" style="left:3.00px;top:0.00px;transform:scaleX(0.8887);">(203A)</span><span id="t81" class="t lt" style="left:44.30px;top:0.00px;transform:scaleX(0.8969);">Enhanced Thermal Velocity Boost</span><span id="t82" class="t lt" style="left:286.30px;top:0.00px;transform:scaleX(0.8568);">Yes</span><span id="t83" class="t lt" style="left:325.30px;top:0.00px;transform:scaleX(0.8823);">Default</span><span id="t84" class="t lt" style="left:404.00px;top:0.00px;transform:scaleX(0.8627);">Auto</span><span id="t85" class="t lt" style="left:522.00px;top:0.00px;transform:scaleX(0.8627);">Auto</span></div>
<div class="r" style="top:79.67px"><span id="t86" class="t lt" style="left:3.00px;top:0.00px;transform:scaleX(0.8726);">(014C)</span><span id="t87" class="t lt" style="left:286.30px;top:0.00px;transform:scaleX(0.8568);">Yes</span><span id="t88" class="t lt" style="left:325.30px;top:0.00px;transform:scaleX(0.8823);">Default</span></div>
<div class="r" style="top:90.68px"><span id="t89" class="t lt" style="left:3.00px;top:0.00px;transform:scaleX(0.9054);">(1F96)</span><span id="t90" class="t lt" style="left:44.30px;top:0.00px;transform:scaleX(0.9077);"><i class="e"></i>{a1#CPU Tj Max</span><span id="t91" class="t lt" style="left:286.30px;top:0.00px;transform:scaleX(0.8568);">Yes</span><span id="t92" class="t lt" style="left:325.30px;top:0.00px;transform:scaleX(0.8823);">Default</span><span id="t93" class="t lt" style="left:404.00px;top:0.00px;transform:scaleX(0.8894);">0</span><span id="t94" class="t lt" style="left:522.00px;top:0.00px;transform:scaleX(0.8894);">0</span></div>
<div class="r" style="top:101.69px"><span id="t95" class="t lt" style="left:3.00px;top:0.00px;transform:scaleX(0.9054);">(1F98)</span><span id="t96" class="t lt" style="left:44.30px;top:0.00px;transform:scaleX(0.8983);"><i class="e"></i>{a1#Fast Throttle Threshold</span><span id="t97" class="t lt" style="left:286.30px;top:0.00px;transform:scaleX(0.8568);">Yes</span><span id="t98" class="t lt" style="left:325.30px;top:0.00px;transform:scaleX(0.8823);">Default</span><span id="t99" class="t lt" style="left:404.00px;top:0.00px;transform:scaleX(0.8894);">0</span><span id="t100" class="t lt" style="left:522.00px;top:0.00px;transform:scaleX(0.8894);">0</span></div>
<div class="r" style="top:112.70px"><span id="t101" class="t lt" style="left:3.00px;top:0.00px;transform:scaleX(0.8887);">(067B)</span><span id="t102" class="t lt" style="left:44.30px;top:0.00px;transform:scaleX(0.9016);">Dual Tau Boost</span><span id="t103" class="t lt" style="left:286.30px;top:0.00px;transform:scaleX(0.8568);">Yes</span><span id="t104" class="t lt" style="left:325.30px;top:0.00px;transform:scaleX(0.8823);">Default</span><span id="t105" class="t lt" style="left:404.00px;top:0.00px;transform:scaleX(0.8566);">Disabled</span><span id="t106" class="t lt" style="left:522.00px;top:0.00px;transform:scaleX(0.8566);">Disabled</span></div>
<div class="r" style="top:123.71px"><span id="t107" class="t lt" style="left:3.00px;top:0.00px;transform:scaleX(0.8420);">(2AC3)</span><span id="t108" class="t lt" style="left:44.30px;top:0.00px;transform:scaleX(0.8852);">Load Intel Base Power Limit Settings</span><span id="t109" class="t lt" style="left:286.30px;top:0.00px;transform:scaleX(0.8568);">Yes</span><span id="t110" class="t lt" style="left:325.30px;top:0.00px;transform:scaleX(0.8823);">Default</span><span id="t111" class="t lt" style="left:404.00px;top:0.00px;transform:scaleX(0.8566);">Disabled</span><span id="t112" class="t lt" style="left:522.00px;top:0.00px;transform:scaleX(0.8566);">Disabled</span></div>
<div class="r" style="top:134.72px"><span id="t113" class="t lt" style="left:3.00px;top:0.00px;transform:scaleX(0.8887);">(2A94)</span><span id="t114" class="t lt" style="left:44.30px;top:0.00px;transform:scaleX(0.9062);"><i class="e"></i>{a1#<i class="e"></i>{f3#Long Duration Power Limit<i class="e"></i>{p200#<i class="e"></i>[1;37;m%4d.%0...</span><span id="t115" class="t lt" style="left:286.30px;top:0.00px;transform:scaleX(0.8568);">Yes</span><span id="t116" class="t lt" style="left:325.30px;top:0.00px;transform:scaleX(0.8823);">Default</span><span id="t117" class="t lt" style="left:404.00px;top:0.00px;transform:scaleX(0.8894);">0</span><span id="t118" class="t lt" style="left:522.00px;top:0.00px;transform:scaleX(0.8894);">0</span></div>
<div class="r" style="top:145.73px"><span id="t119" class="t lt" style="left:3.00px;top:0.00px;transform:scaleX(0.8887);">(2A96)</span><span id="t120" class="t lt" style="left:44.30px;top:0.00px;transform:scaleX(0.8963);">Long Duration Maintained<i class="e"></i>{p200#<i class="e"></i>[1;37;m%3d<i class="e"></i>[;;m</span><span id="t121" class="t lt" style="left:286.30px;top:0.00px;transform:scaleX(0.8568);">Yes</span><span id="t122" class="t lt" style="left:325.30px;top:0.00px;transform:scaleX(0.8823);">Default</span><span id="t123" class="t lt" style="left:404.00px;top:0.00px;transform:scaleX(0.8627);">Auto</span><span id="t124" class="t lt" style="left:522.00px;top:0.00px;transform:scaleX(0.8627);">Auto</span></div>
<div class="r" style="top:156.74px"><span id="t125" class="t lt" style="left:3.00px;top:0.00px;transform:scaleX(0.8570);">(2AB7)</span><span id="t126" class="t lt" style="left:44.30px;top:0.00px;transform:scaleX(0.9022);"><i class="e"></i>{a1#<i class="e"></i>{f3#Short Duration Power Limit<i class="e"></i>{p200#<i class="e"></i>[1;37;m%4d.%...</span><span id="t127" class="t lt" style="left:286.30px;top:0.00px;transform:scaleX(0.8568);">Yes</span><span id="t128" class="t lt" style="left:325.30px;top:0.00px;transform:scaleX(0.8823);">Default</span><span id="t129" class="t lt" style="left:404.00px;top:0.00px;transform:scaleX(0.8894);">0</span><span id="t130" class="t lt" style="left:522.00px;top:0.00px;transform:scaleX(0.8894);">0</span></div>
<div class="r" style="top:167.75px"><span id="t131" class="t lt" style="left:3.00px;top:0.00px;transform:scaleX(0.8570);">(2AB9)</span><span id="t132" class="t lt" style="left:44.30px;top:0.00px;transform:scaleX(0.8998);"><i class="e"></i>{a1#<i class="e"></i>{f3#Power Limit 4<i class="e"></i>{p200#<i class="e"></i>[1;37;m%4d.%03d<i class="e"></i>[;;m</span><span id="t133" class="t lt" style="left:286.30px;top:0.00px;transform:scaleX(0.8568);">Yes</span><span id="t134" class="t lt" style="left:325.30px;top:0.00px;transform:scaleX(0.8823);">Default</span><span id="t135" class="t lt" style="left:404.00px;top:0.00px;transform:scaleX(0.8894);">0</span><span id="t136" class="t lt" style="left:522.00px;top:0.00px;transform:scaleX(0.8894);">0</span></div>
<div class="r" style="top:178.76px"><span id="t137" class="t lt" style="left:3.00px;top:0.00px;transform:scaleX(0.8275);">(2ABB)</span><span id="t138" class="t lt" style="left:44.30px;top:0.00px;transform:scaleX(0.8602);">CPU Core Unlimited Current Limit</span><span id="t139" class="t lt" style="left:286.30px;top:0.00px;transform:scaleX(0.8568);">Yes</span><span id="t140" class="t lt" style="left:325.30px;top:0.00px;transform:scaleX(0.8823);">Default</span><span id="t141" class="t lt" style="left:404.00px;top:0.00px;transform:scaleX(0.8627);">Auto</span><span id="t142" class="t lt" style="left:522.00px;top:0.00px;transform:scaleX(0.8627);">Auto</span></div>
<div class="r" style="top:189.77px"><span id="t143" class="t lt" style="left:3.00px;top:0.00px;transform:scaleX(0.8420);">(2AC0)</span><span id="t144" class="t lt" style="left:44.30px;top:0.00px;transform:scaleX(0.8930);"><i class="e"></i>{a1#<i class="e"></i>{f2#CPU Core Current Limit<i class="e"></i>{p200#<i class="e"></i>[1;37;m%s<i class="e"></i>[;;m</span><span id="t145" class="t lt" style="left:286.30px;top:0.00px;transform:scaleX(0.8568);">Yes</span><span id="t146" class="t lt" style="left:325.30px;top:0.00px;transform:scaleX(0.8823);">Default</span><span id="t147" class="t lt" style="left:404.00px;top:0.00px;transform:scaleX(0.8894);">0</span><span id="t148" class="t lt" style="left:522.00px;top:0.00px;transform:scaleX(0.8894);">0</span></div>
<div class="r" style="top:200.78px"><span id="t149" class="t lt" style="left:3.00px;top:0.00px;transform:scaleX(0.8135);">(2ABD)</span><span id="t150" class="t lt" style="left:44.30px;top:0.00px;transform:scaleX(0.8619);">GT Unlimited Current Limit</span><span id="t151" class="t lt" style="left:286.30px;top:0.00px;transform:scaleX(0.8568);">Yes</span><span id="t152" class="t lt" style="left:325.30px;top:0.00px;transform:scaleX(0.8823);">Default</span><span id="t153" class="t lt" style="left:404.00px;top:0.00px;transform:scaleX(0.8627);">Auto</span><span id="t154" class="t lt" style="left:522.00px;top:0.00px;transform:scaleX(0.8627);">Auto</span></div>
<div class="r" style="top:211.79px"><span id="t155" class="t lt" style="left:3.00px;top:0.00px;transform:scaleX(0.8420);">(2AC1)</span><span id="t156" class="t lt" style="left:44.30px;top:0.00px;transform:scaleX(0.8986);"><i class="e"></i>{a1#<i class="e"></i>{f2#GT Current Limit<i class="e"></i>{p200#<i class="e"></i>[1;37;m%s<i class="e"></i>[;;m</span><span id="t157" class="t lt" style="left:286.30px;top:0.00px;transform:scaleX(0.8568);">Yes</span><span id="t158" class="t lt" style="left:325.30px;top:0.00px;transform:scaleX(0.8823);">Default</span><span id="t159" class="t lt" style="left:404.00px;top:0.00px;transform:scaleX(0.8894);">0</span><span id="t160" class="t lt" style="left:522.00px;top:0.00px;transform:scaleX(0.8894);">0</span></div>
<div class="r" style="top:222.80px"><span id="t161" class="t lt" style="left:3.00px;top:0.00px;transform:scaleX(0.8887);">(1FA0)</span><span id="t162" class="t lt" style="left:44.30px;top:0.00px;transform:scaleX(0.8868);">IA CEP Enable</span><span id="t163" class="t lt" style="left:286.30px;top:0.00px;transform:scaleX(0.8568);">Yes</span><span id="t164" class="t lt" style="left:325.30px;top:0.00px;transform:scaleX(0.8823);">Default</span><span id="t165" class="t lt" style="left:404.00px;top:0.00px;transform:scaleX(0.8627);">Auto</span><span id="t166" class="t lt" style="left:522.00px;top:0.00px;transform:scaleX(0.8627);">Auto</span></div>
<div class="r" style="top:233.81px"><span id="t167" class="t lt" style="left:3.00px;top:0.00px;transform:scaleX(0.8887);">(1FA2)</span><span id="t168" class="t lt" style="left:44.30px;top:0.00px;transform:scaleX(0.8813);">GT CEP Enable</span><span id="t169" class="t lt" style="left:286.30px;top:0.00px;transform:scaleX(0.8568);">Yes</span><span id="t170" class="t lt" style="left:325.30px;top:0.00px;transform:scaleX(0.8823);">Default</span><span id="t171" class="t lt" style="left:404.00px;top:0.00px;transform:scaleX(0.8627);">Auto</span><span id="t172" class="t lt" style="left:522.00px;top:0.00px;transform:scaleX(0.8627);">Auto</span></div>
<div class="r" style="top:244.82px"><span id="t173" class="t lt" style="left:3.00px;top:0.00px;transform:scaleX(0.8726);">(014C)</span><span id="t174" class="t lt" style="left:286.30px;top:0.00px;transform:scaleX(0.8568);">Yes</span><span id="t175" class="t lt" style="left:325.30px;top:0.00px;transform:scaleX(0.8823);">Default</span></div>
<div class="r" style="top:255.83px"><span id="t176" class="t lt" style="left:3.00px;top:0.00px;transform:scaleX(0.9228);">(0834)</span><span id="t177" class="t lt" style="left:44.30px;top:0.00px;transform:scaleX(0.8807);">TDC Enable</span><span id="t178" class="t lt" style="left:286.30px;top:0.00px;transform:scaleX(0.8568);">Yes</span><span id="t179" class="t lt" style="left:325.30px;top:0.00px;transform:scaleX(0.8823);">Default</span><span id="t180" class="t lt" style="left:404.00px;top:0.00px;transform:scaleX(0.8627);">Auto</span><span id="t181" class="t lt" style="left:522.00px;top:0.00px;transform:scaleX(0.8627);">Auto</span></div>
<div class="r" style="top:266.84px"><span id="t182" class="t lt" style="left:3.00px;top:0.00px;transform:scaleX(0.8420);">(2AEF)</span><span id="t183" class="t lt" style="left:44.30px;top:0.00px;transform:scaleX(0.8974);"><i class="e"></i>{a1#IA TDC Current Limit<i class="e"></i>{p200#<i class="e"></i>[1;37;m%d<i class="e"></i>[;;m</span><span id="t184" class="t lt" style="left:286.30px;top:0.00px;transform:scaleX(0.8568);">Yes</span><span id="t185" class="t lt" style="left:325.30px;top:0.00px;transform:scaleX(0.8823);">Default</span><span id="t186" class="t lt" style="left:404.00px;top:0.00px;transform:scaleX(0.8894);">0</span><span id="t187" class="t lt" style="left:522.00px;top:0.00px;transform:scaleX(0.8894);">0</span></div>
<div class="r" style="top:277.85px"><span id="t188" class="t lt" style="left:3.00px;top:0.00px;transform:scaleX(0.8726);">(2AF0)</span><span id="t189" class="t lt" style="left:44.30px;top:0.00px;transform:scaleX(0.9105);"><i class="e"></i>{a1#IA TDC Time Window<i class="e"></i>{p200#<i class="e"></i>[1;37;m%d<i class="e"></i>[;;m</span><span id="t190" class="t lt" style="left:286.30px;top:0.00px;transform:scaleX(0.8568);">Yes</span><span id="t191" class="t lt" style="left:325.30px;top:0.00px;transform:scaleX(0.8823);">Default</span><span id="t192" class="t lt" style="left:404.00px;top:0.00px;transform:scaleX(0.8627);">Auto</span><span id="t193" class="t lt" style="left:522.00px;top:0.00px;transform:scaleX(0.8627);">Auto</span></div>
<div class="r" style="top:288.86px"><span id="t194" class="t lt" style="left:3.00px;top:0.00px;transform:scaleX(0.8726);">(014C)</span><span id="t195" class="t lt" style="left:286.30px;top:0.00px;transform:scaleX(0.8568);">Yes</span><span id="t196" class="t lt" style="left:325.30px;top:0.00px;transform:scaleX(0.8823);">Default</span></div>
<div class="r sel" style="top:299.87px"><span id="t197" class="t lt" style="left:3.00px;top:0.00px;transform:scaleX(0.8420);">(2ED8)</span><span id="t198" class="t lt" style="left:44.30px;top:0.00px;transform:scaleX(0.8709);">CPU Power Limitation</span><span id="t199" class="t lt" style="left:286.30px;top:0.00px;transform:scaleX(0.8568);">Yes</span><span id="t200" class="t lt" style="left:325.30px;top:0.00px;transform:scaleX(0.8823);">Default</span><span id="t201" class="t lt" style="left:404.00px;top:0.00px;transform:scaleX(0.9165);">Lock</span><span id="t202" class="t lt" style="left:522.00px;top:0.00px;transform:scaleX(0.9165);">Lock</span></div>
<div class="r" style="top:310.88px"><span id="t203" class="t lt" style="left:3.00px;top:0.00px;transform:scaleX(0.8726);">(2AF1)</span><span id="t204" class="t lt" style="left:44.30px;top:0.00px;transform:scaleX(0.9153);"><i class="e"></i>{a1#IA TDC Lock<i class="e"></i>{p200#<i class="e"></i>[1;37;m%d<i class="e"></i>[;;m</span><span id="t205" class="t lt" style="left:286.30px;top:0.00px;transform:scaleX(0.8568);">Yes</span><span id="t206" class="t lt" style="left:325.30px;top:0.00px;transform:scaleX(0.8823);">Default</span><span id="t207" class="t lt" style="left:404.00px;top:0.00px;transform:scaleX(0.8627);">Auto</span><span id="t208" class="t lt" style="left:522.00px;top:0.00px;transform:scaleX(0.8627);">Auto</span></div>
<div class="r" style="top:321.89px"><span id="t209" class="t lt" style="left:3.00px;top:0.00px;transform:scaleX(0.8726);">(072D)</span><span id="t210" class="t lt" style="left:44.30px;top:0.00px;transform:scaleX(0.9014);">Package Power Limit MSR Lock</span><span id="t211" class="t lt" style="left:286.30px;top:0.00px;transform:scaleX(0.8568);">Yes</span><span id="t212" class="t lt" style="left:325.30px;top:0.00px;transform:scaleX(0.8823);">Default</span><span id="t213" class="t lt" style="left:404.00px;top:0.00px;transform:scaleX(0.8627);">Auto</span><span id="t214" class="t lt" style="left:522.00px;top:0.00px;transform:scaleX(0.8627);">Auto</span></div>
<div class="r" style="top:332.90px"><span id="t215" class="t lt" style="left:3.00px;top:0.00px;transform:scaleX(0.9228);">(0912)</span><span id="t216" class="t lt" style="left:44.30px;top:0.00px;transform:scaleX(0.9175);">Overclocking Lock</span><span id="t217" class="t lt" style="left:286.30px;top:0.00px;transform:scaleX(0.8568);">Yes</span><span id="t218" class="t lt" style="left:325.30px;top:0.00px;transform:scaleX(0.8823);">Default</span><span id="t219" class="t lt" style="left:404.00px;top:0.00px;transform:scaleX(0.8627);">Auto</span><span id="t220" class="t lt" style="left:522.00px;top:0.00px;transform:scaleX(0.8627);">Auto</span></div>
<div class="cl" style="left:38.5px"></div>
<div class="cl" style="left:281.5px"></div>
<div class="cl" style="left:320.0px"></div>
<div class="cl" style="left:399.0px"></div>
<div class="cl" style="left:517.0px"></div>
</div>
<div id="lvs"><div id="lvt"></div></div><div id="lhs"><div id="lht"></div></div>
</div>
<div class="gb" style="left:12px;top:466px;width:709px;height:26px"></div><div class="glb" style="left:17px;top:461px;width:67px"></div>
<span id="t221" class="t gl" style="left:19.00px;top:460.50px;transform:scaleX(0.8553);">Menu Help String</span>
<div class="gb" style="left:12px;top:502px;width:709px;height:32px"></div><div class="glb" style="left:17px;top:497px;width:72px"></div>
<span id="t222" class="t gl" style="left:19.00px;top:495.90px;transform:scaleX(0.8438);">Control Help String</span>
<span id="t223" class="t hp" style="left:19.60px;top:509.50px;transform:scaleX(0.8935);">Unlocking CPU power limitation may cause VRM(Voltage Regulator Module) overheat ,trigger protections (VRM Alert or CPU Tjmax). Please ensure that your cooling solution has been</span>
<span id="t224" class="t hp" style="left:19.60px;top:520.00px;transform:scaleX(0.8968);">well-considered. A liquid cooler for CPU and direct airflow to VRM are recommended; otherwise, DO NOT unlock the CPU power limitation.</span>
<div class="btn" style="left:727.3px;top:476px;width:59.4px;height:17.2px"></div>
<span id="t225" class="t bt" style="left:743.30px;top:477.60px;transform:scaleX(0.8485);">LogFile</span>
<div class="btn dis" style="left:727.3px;top:518px;width:59.4px;height:17.2px"></div>
<span id="t226" class="t bt dis" style="left:747.00px;top:519.60px;transform:scaleX(0.8632);">Undo</span>
<div class="red" style="left:83.8px;top:353px;width:101.6px;height:16.2px;border-width:2px"></div>
<div class="red" style="left:203px;top:387.8px;width:487px;height:16.2px;border-width:2.2px"></div>
<div class="red" style="left:11.9px;top:503.6px;width:702.1px;height:30px;border-width:2.6px 2.2px 2.7px 2.7px"></div>
<span id="t227" class="t wm" style="left:671.20px;top:524.80px;transform:scaleX(0.9993);">forum.onliner.by</span>
</div></body></html>
